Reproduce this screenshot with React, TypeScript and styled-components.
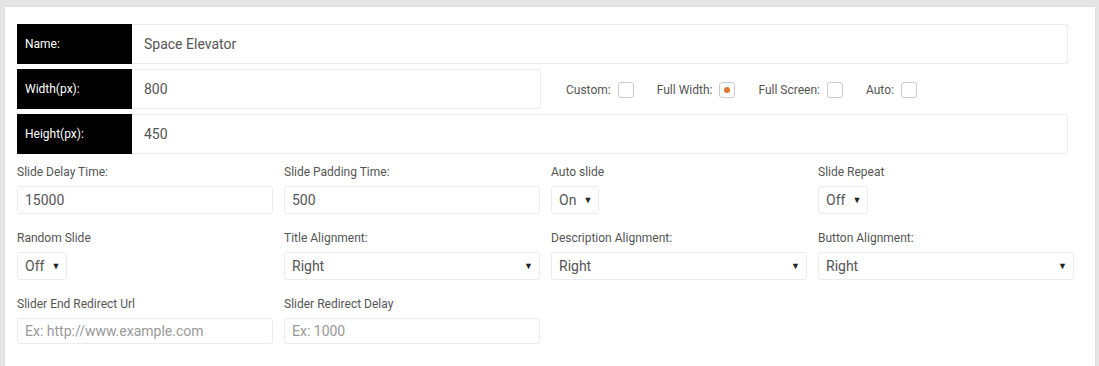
import styled, { createGlobalStyle } from "styled-components";

const GlobalStyle = createGlobalStyle`
  html, body {
    margin: 0;
    padding: 0;
    background: #e5e5e5;
    font-family: Roboto, "Liberation Sans", Arial, sans-serif;
  }
`;

const Page = styled.div`
  height: 366px;
  overflow: hidden;
  padding: 7px 4px 0 5px;
`;

const Panel = styled.div`
  background: #fff;
  height: 400px;
  padding: 17px 0 0 12px;
  box-shadow: 0 0 2px rgba(0, 0, 0, 0.08);
`;

const Rows = styled.div`
  display: flex;
  flex-direction: column;
  gap: 5px;
  width: 1051px;
`;

const Row = styled.div`
  display: flex;
  align-items: center;
  height: 40px;
`;

const RowLabel = styled.div`
  width: 115px;
  height: 40px;
  flex: none;
  background: #000;
  color: #fff;
  font-size: 12px;
  display: flex;
  align-items: center;
  padding-left: 8px;
  box-sizing: border-box;
`;

const RowInput = styled.div<{ $width?: number }>`
  ${(p) => (p.$width ? `width: ${p.$width}px; flex: none;` : "flex: 1;")}
  height: 40px;
  box-sizing: border-box;
  border: 1px solid #ebebeb;
  border-left: none;
  border-radius: 0 3px 3px 0;
  display: flex;
  align-items: center;
  padding-left: 12px;
  font-size: 14px;
  color: #555;
`;

const Options = styled.div`
  display: flex;
  align-items: center;
  gap: 23px;
  margin-left: 25px;
  padding-top: 2px;
`;

const Option = styled.label`
  display: flex;
  align-items: center;
  gap: 7px;
  font-size: 12px;
  color: #555;
`;

const Box = styled.span<{ $checked?: boolean }>`
  width: 16px;
  height: 16px;
  box-sizing: border-box;
  border: 1px solid #ccc;
  border-radius: 3px;
  display: flex;
  align-items: center;
  justify-content: center;
  &::after {
    content: "";
    display: ${(p) => (p.$checked ? "block" : "none")};
    width: 6px;
    height: 6px;
    border-radius: 50%;
    background: #e0782f;
  }
`;

const Grid = styled.div`
  display: grid;
  grid-template-columns: repeat(4, 256px);
  column-gap: 11px;
  row-gap: 17px;
  margin-top: 11px;
`;

const Field = styled.div`
  display: flex;
  flex-direction: column;
  align-items: flex-start;
  gap: 7px;
`;

const FieldLabel = styled.div`
  font-size: 12px;
  line-height: 14px;
  color: #555;
`;

const TextBox = styled.div<{ $placeholder?: boolean }>`
  width: 100%;
  height: ${(p) => (p.$placeholder ? 26 : 28)}px;
  box-sizing: border-box;
  border: 1px solid #ebebeb;
  border-radius: 3px;
  display: flex;
  align-items: center;
  padding-left: 7px;
  font-size: 14px;
  color: ${(p) => (p.$placeholder ? "#999" : "#555")};
`;

const Select = styled.div<{ $wide?: boolean }>`
  ${(p) => (p.$wide ? "width: 100%;" : "")}
  height: 28px;
  box-sizing: border-box;
  border: 1px solid #ebebeb;
  border-radius: 3px;
  display: flex;
  align-items: center;
  justify-content: space-between;
  gap: 7px;
  padding: 0 6px 0 7px;
  font-size: 14px;
  color: #555;
`;

const Arrow = styled.span`
  font-size: 9px;
  color: #222;
`;

function App() {
  return (
    <Page>
      <GlobalStyle />
      <Panel>
        <Rows>
          <Row>
            <RowLabel>Name:</RowLabel>
            <RowInput>Space Elevator</RowInput>
          </Row>
          <Row>
            <RowLabel>Width(px):</RowLabel>
            <RowInput $width={409}>800</RowInput>
            <Options>
              <Option>
                Custom: <Box />
              </Option>
              <Option>
                Full Width: <Box $checked />
              </Option>
              <Option>
                Full Screen: <Box />
              </Option>
              <Option>
                Auto: <Box />
              </Option>
            </Options>
          </Row>
          <Row>
            <RowLabel>Height(px):</RowLabel>
            <RowInput>450</RowInput>
          </Row>
        </Rows>
        <Grid>
          <Field>
            <FieldLabel>Slide Delay Time:</FieldLabel>
            <TextBox>15000</TextBox>
          </Field>
          <Field>
            <FieldLabel>Slide Padding Time:</FieldLabel>
            <TextBox>500</TextBox>
          </Field>
          <Field>
            <FieldLabel>Auto slide</FieldLabel>
            <Select>
              On <Arrow>▼</Arrow>
            </Select>
          </Field>
          <Field>
            <FieldLabel>Slide Repeat</FieldLabel>
            <Select>
              Off <Arrow>▼</Arrow>
            </Select>
          </Field>
          <Field>
            <FieldLabel>Random Slide</FieldLabel>
            <Select>
              Off <Arrow>▼</Arrow>
            </Select>
          </Field>
          <Field>
            <FieldLabel>Title Alignment:</FieldLabel>
            <Select $wide>
              Right <Arrow>▼</Arrow>
            </Select>
          </Field>
          <Field>
            <FieldLabel>Description Alignment:</FieldLabel>
            <Select $wide>
              Right <Arrow>▼</Arrow>
            </Select>
          </Field>
          <Field>
            <FieldLabel>Button Alignment:</FieldLabel>
            <Select $wide>
              Right <Arrow>▼</Arrow>
            </Select>
          </Field>
          <Field>
            <FieldLabel>Slider End Redirect Url</FieldLabel>
            <TextBox $placeholder>Ex: http://www.example.com</TextBox>
          </Field>
          <Field>
            <FieldLabel>Slider Redirect Delay</FieldLabel>
            <TextBox $placeholder>Ex: 1000</TextBox>
          </Field>
        </Grid>
      </Panel>
    </Page>
  );
}

export default App;
